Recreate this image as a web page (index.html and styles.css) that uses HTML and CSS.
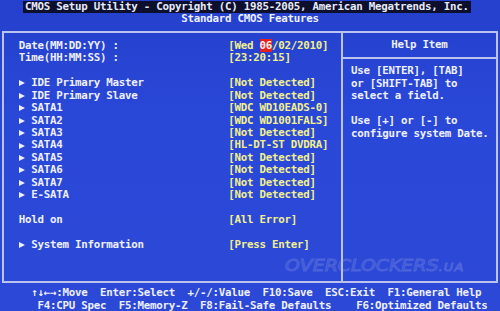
FILE: index.html
```
<!DOCTYPE html>
<html>
  <head>
    <title>CMOS Setup Utility</title>
    <link rel="stylesheet" href="styles.css">
  </head>
  <body>
    <div class="screen">
      <div class="title">
        <span class="title-bar">CMOS Setup Utility - Copyright (C) 1985-2005, American Megatrends, Inc.</span>
      </div>
      <div class="subtitle">Standard CMOS Features</div>

      <div class="frame">
        <div class="main">
          <div class="row">
            <span class="label">Date(MM:DD:YY) :</span>
            <span class="value">[Wed <span class="selected">06</span>/02/2010]</span>
          </div>
          <div class="row">
            <span class="label">Time(HH:MM:SS) :</span>
            <span class="value">[23:20:15]</span>
          </div>
          <div class="row"></div>
          <div class="row">
            <span class="label"><i class="arrow"></i>IDE Primary Master</span>
            <span class="value">[Not Detected]</span>
          </div>
          <div class="row">
            <span class="label"><i class="arrow"></i>IDE Primary Slave</span>
            <span class="value">[Not Detected]</span>
          </div>
          <div class="row">
            <span class="label"><i class="arrow"></i>SATA1</span>
            <span class="value">[WDC WD10EADS-0]</span>
          </div>
          <div class="row">
            <span class="label"><i class="arrow"></i>SATA2</span>
            <span class="value">[WDC WD1001FALS]</span>
          </div>
          <div class="row">
            <span class="label"><i class="arrow"></i>SATA3</span>
            <span class="value">[Not Detected]</span>
          </div>
          <div class="row">
            <span class="label"><i class="arrow"></i>SATA4</span>
            <span class="value">[HL-DT-ST DVDRA]</span>
          </div>
          <div class="row">
            <span class="label"><i class="arrow"></i>SATA5</span>
            <span class="value">[Not Detected]</span>
          </div>
          <div class="row">
            <span class="label"><i class="arrow"></i>SATA6</span>
            <span class="value">[Not Detected]</span>
          </div>
          <div class="row">
            <span class="label"><i class="arrow"></i>SATA7</span>
            <span class="value">[Not Detected]</span>
          </div>
          <div class="row">
            <span class="label"><i class="arrow"></i>E-SATA</span>
            <span class="value">[Not Detected]</span>
          </div>
          <div class="row"></div>
          <div class="row">
            <span class="label">Hold on</span>
            <span class="value">[All Error]</span>
          </div>
          <div class="row"></div>
          <div class="row">
            <span class="label"><i class="arrow"></i>System Information</span>
            <span class="value">[Press Enter]</span>
          </div>
        </div>

        <div class="help">
          <div class="help-head">Help Item</div>
          <div class="help-text">
            <div class="row">Use [ENTER], [TAB]</div>
            <div class="row">or [SHIFT-TAB] to</div>
            <div class="row">select a field.</div>
            <div class="row"></div>
            <div class="row">Use [+] or [-] to</div>
            <div class="row">configure system Date.</div>
          </div>
        </div>
      </div>

      <div class="footer">
        <div class="keys first">↑↓←→:Move  Enter:Select  +/-/:Value  F10:Save  ESC:Exit  F1:General Help</div>
        <div class="keys second">F4:CPU Spec  F5:Memory-Z  F8:Fail-Safe Defaults    F6:Optimized Defaults</div>
      </div>

      <div class="watermark">OVERCLOCKERS<span class="tld">.UA</span></div>
    </div>
  </body>
</html>
```

FILE: styles.css
```
body {
  margin: 0;
  width: 500px;
  height: 311px;
  overflow: hidden;
  background: linear-gradient(#2440cc, #2a48d8 40%, #2c48d6);
  color: #eef0ff;
  font-family: 'DejaVu Sans Mono', 'Liberation Mono', monospace;
  font-weight: bold;
  font-size: 10.8px;
  letter-spacing: -0.25px;
  line-height: 12.44px;
}

.screen {
  position: relative;
  height: 311px;
  padding-top: 1px;
  box-sizing: border-box;
}

.title {
  display: flex;
  height: 12.44px;
}

.title-bar {
  margin-left: 23px;
  padding: 0 2px;
  background-color: #0d0f2e;
  color: #e6eaf8;
  white-space: pre;
}

.subtitle {
  height: 12.44px;
  text-align: center;
}

.frame {
  display: flex;
  height: 252px;
  margin: 5px 2px 0;
  border: 2px solid #bcc3f0;
  box-sizing: border-box;
}

.main {
  width: 339px;
  padding: 7px 0 0 14.75px;
  border-right: 2px solid #bcc3f0;
  box-sizing: border-box;
}

.row {
  display: flex;
  height: 12.44px;
  white-space: pre;
}

.label {
  display: flex;
  align-items: center;
  width: 209.5px;
  flex-shrink: 0;
}

.arrow {
  width: 0;
  height: 0;
  margin: 0 6.5px 0 0;
  border-left: 6px solid #eef0ff;
  border-top: 3.5px solid transparent;
  border-bottom: 3.5px solid transparent;
}

.value {
  color: #f2f08c;
}

.selected {
  background-color: #e3201c;
  color: #f4f0f0;
}

.help {
  flex: 1;
}

.help-head {
  display: flex;
  align-items: center;
  justify-content: center;
  height: 24px;
  border-bottom: 2px solid #bcc3f0;
}

.help-text {
  padding: 6.6px 0 0 8px;
}

.footer {
  margin-top: 4.5px;
}

.keys {
  height: 12.44px;
  white-space: pre;
}

.keys.first {
  padding-left: 31.25px;
}

.keys.second {
  padding-left: 37.5px;
}

.watermark {
  position: absolute;
  left: 285px;
  top: 258px;
  font-family: 'DejaVu Sans', sans-serif;
  font-style: italic;
  font-weight: normal;
  font-size: 16px;
  line-height: 16px;
  letter-spacing: 0;
  color: rgba(255, 255, 255, 0.03);
  -webkit-text-stroke: 1px rgba(160, 170, 230, 0.3);
  transform: scaleX(1.18);
  transform-origin: left;
}

.watermark .tld {
  font-size: 11px;
  letter-spacing: 1px;
}
```
